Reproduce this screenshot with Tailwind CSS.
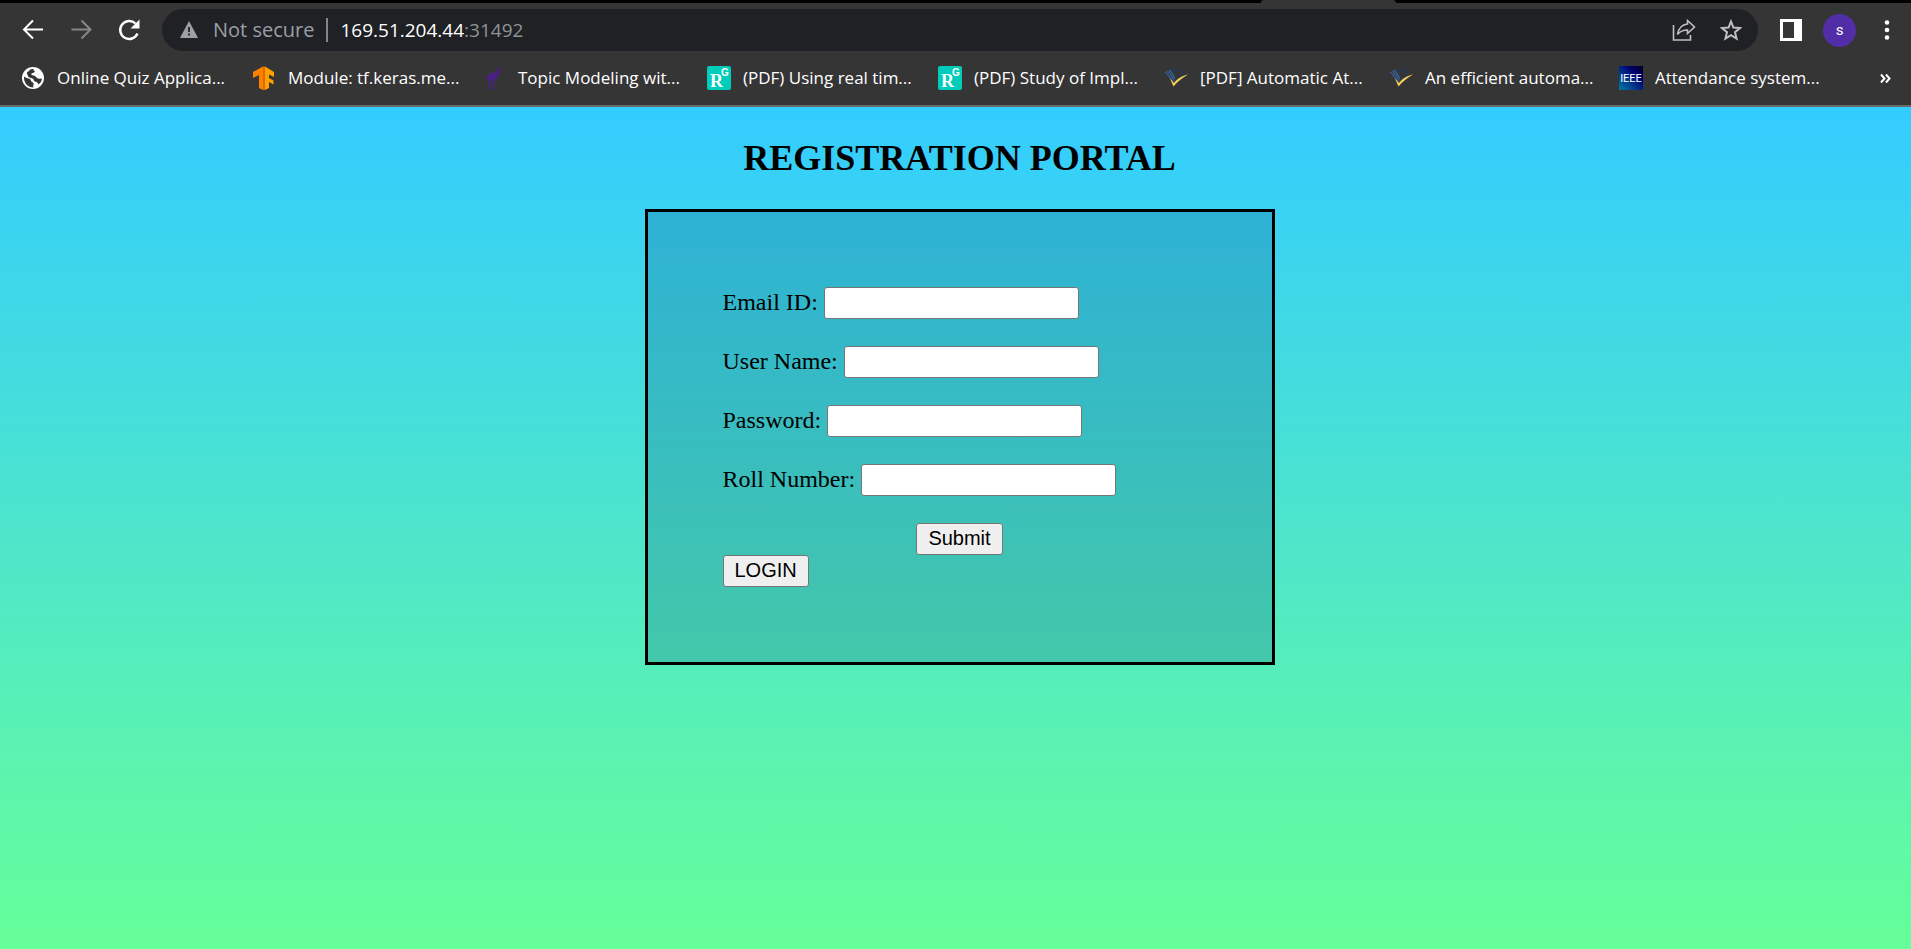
<!DOCTYPE html>
<html lang="en">
<head>
<meta charset="utf-8">
<meta name="viewport" content="width=device-width, initial-scale=1">
<title>Registration Portal</title>
<script src="https://cdn.jsdelivr.net/npm/@tailwindcss/browser@4"></script>
</head>
<body class="flex min-h-screen flex-col bg-[#353535]">
<svg class="hidden" aria-hidden="true">
  <symbol id="rg" viewBox="0 0 24 24">
    <rect width="24" height="24" rx="2" fill="#00ccbb"/>
    <text x="3" y="21" font-family="Liberation Serif, serif" font-weight="bold" font-size="18" fill="#fff">R</text>
    <text x="14" y="10" font-family="Liberation Sans, sans-serif" font-weight="bold" font-size="10" fill="#fff">G</text>
  </symbol>
  <symbol id="scholar" viewBox="0 0 24 24">
    <path d="M7 4l9-.5 2 3-1 6-6 4z" fill="none" stroke="#1f3a6e" stroke-width="1.2"/>
    <path d="M1 6c3 2 5 5 8 11M3 5c3 2 5 5 7 10M5 4c3 2 4 5 6 9" fill="none" stroke="#3b6297" stroke-width="1.2"/>
    <path d="M6 12.500l4 4.500C14 12 18 10 24 8.500 18 12 13 16 9.500 20.500z" fill="#f6d155"/>
  </symbol>
</svg>

<header class="text-white">
  <div class="flex h-[3px] bg-black">
    <div class="ml-[66%] w-[135px] rounded-t-sm bg-[#353535]"></div>
  </div>
  <div class="flex items-center pt-[6px] pr-3 pl-[21px]">
    <button type="button" aria-label="Back" class="mr-6 size-6">
      <svg viewBox="0 0 24 24" fill="none" stroke="#fff" stroke-width="2"><path d="M22 11.500H3.500M12 2.500l-9 9 9 9"/></svg>
    </button>
    <button type="button" aria-label="Forward" class="mr-6 size-6">
      <svg viewBox="0 0 24 24" fill="none" stroke="#868686" stroke-width="2"><path d="M2.500 11.500H21M12.500 2.500l9 9-9 9"/></svg>
    </button>
    <button type="button" aria-label="Reload" class="mr-[21px] size-6">
      <svg viewBox="0 0 24 24"><path d="M20.500 15.500A9 9 0 1 1 18.500 5.500" fill="none" stroke="#fff" stroke-width="2.400"/><path d="M22.500 1.500v9h-9z" fill="#fff"/></svg>
    </button>
    <div class="flex h-[42px] flex-1 items-center rounded-full bg-[#202124] pr-[14px] pl-[18px] font-['Open_Sans',sans-serif] text-[19px]">
      <svg class="mr-[15px] h-[18px] w-[18px]" viewBox="0 0 18 18"><path d="M9 0l9 17H0z" fill="#9aa0a6"/><path d="M9 6v5M9 12.500v2" stroke="#202124" stroke-width="1.800"/></svg>
      <span class="text-xl text-[#9aa0a6]">Not secure</span>
      <span class="mx-3 h-6 w-[2px] bg-[#80868b]"></span>
      <span>169.51.204.44<span class="text-[#8f9398]">:31492</span></span>
      <span class="flex-1"></span>
      <button type="button" aria-label="Share" class="mr-6 size-6">
        <svg viewBox="0 0 24 24" fill="none" stroke="#c0c0c0" stroke-width="1.600"><path d="M1.500 7v15h17v-5"/><path d="M15.500 2.500l7 6.500-7 6.500V12c-4.500 0-7.500 1.300-10 4.500C6.500 10.500 10 6.500 15.500 6z"/></svg>
      </button>
      <button type="button" aria-label="Bookmark this page" class="size-6">
        <svg viewBox="0 0 24 24" fill="none" stroke="#c0c0c0" stroke-width="2"><path d="M11 3.500l2.400 6 6.600.5-5 4.200 1.600 6.500-5.600-3.500-5.600 3.500L7 14.200 2 10l6.600-.5z"/></svg>
      </button>
    </div>
    <button type="button" aria-label="Side panel" class="ml-[22px] h-[22px] w-[22px]">
      <svg viewBox="0 0 22 22"><path fill="#fff" fill-rule="evenodd" d="M0 0h22v22H0zM3 3v16h11V3z"/></svg>
    </button>
    <button type="button" aria-label="Profile" class="ml-[21px] size-[33px] rounded-full bg-[#512da8] font-[Roboto,sans-serif] text-[15px] leading-[33px]">s</button>
    <button type="button" aria-label="Menu" class="ml-[19px] size-6">
      <svg viewBox="0 0 24 24" fill="#fff"><circle cx="12" cy="4.500" r="2.300"/><circle cx="12" cy="12" r="2.300"/><circle cx="12" cy="19.500" r="2.300"/></svg>
    </button>
  </div>
  <nav aria-label="Bookmarks" class="flex h-14 items-center border-b-2 border-[#6a6a6a] pr-5 pl-[21px] font-['Open_Sans',sans-serif] text-[17px] whitespace-nowrap">
    <a href="#" class="flex w-[231px] items-center gap-3">
      <svg class="size-6 shrink-0" viewBox="0 0 24 24"><circle cx="12" cy="12" r="11" fill="#fff"/><path d="M3 10.500c2 2 4.500 1.500 6 2.500 1.300 1 .5 2.200 2 3 1.300.7 2 1 1.500 2.500-.3 1-.5 2 0 3C7 21.500 2.500 17 3 10.500zM9 3.500l3.500-.8c-.5 1.500.3 2 1.500 2.300-.3 1.500-2 2-3.500 2.500-.8.5.2 1.500 1 1.700 2 .3 3.500 1.300 4.500 2.800 1 1 3 .8 5 .5-.2 2.500-1.500 4.500-3.500 6-.5-1.500-1.500-2.500-3-2.800-2-.4-1.500-2-2.500-3-1.500-1-4.500-.7-5-2.700-.3-1.500-1.500-2-1-3.500C7 5.500 8.500 5 9 3.500z" fill="#353535"/></svg>
      <span>Online Quiz Applica...</span>
    </a>
    <a href="#" class="flex w-[230px] items-center gap-3">
      <svg class="size-6 shrink-0" viewBox="0 0 24 24"><path d="M1 6L11 .5V24l-4-2V9L1 12z" fill="#ff8000"/><path d="M11 .5h2V24h-2z" fill="#d96b00"/><path d="M13 .5L22 6v5l-5-2.500V12l4.500 2.500v4L17 16v6l-4 2z" fill="#ffa000"/></svg>
      <span>Module: tf.keras.me...</span>
    </a>
    <a href="#" class="flex w-[225px] items-center gap-3">
      <svg class="size-6 shrink-0" viewBox="0 0 24 24"><path d="M17 0l1 2 2 1.800-2.200.5c-.3 3-.8 6.200-3.300 8.200-.8.700-1.500 1-2 1.300l-.6 8.700 1.500 1h-3l.2-9H9.200l-.9 3.500.2 6 .8 1.200H6.200l.9-1.700-.3-4.500.4-5-1.700 1C4 11 5 7.500 10 7c3-.3 5-1 6-3.500z" fill="#4b2085"/></svg>
      <span>Topic Modeling wit...</span>
    </a>
    <a href="#" class="flex w-[231px] items-center gap-3">
      <svg class="size-6 shrink-0"><use href="#rg"/></svg>
      <span>(PDF) Using real tim...</span>
    </a>
    <a href="#" class="flex w-[226px] items-center gap-3">
      <svg class="size-6 shrink-0"><use href="#rg"/></svg>
      <span>(PDF) Study of Impl...</span>
    </a>
    <a href="#" class="flex w-[225px] items-center gap-3">
      <svg class="size-6 shrink-0"><use href="#scholar"/></svg>
      <span>[PDF] Automatic At...</span>
    </a>
    <a href="#" class="flex w-[230px] items-center gap-3">
      <svg class="size-6 shrink-0"><use href="#scholar"/></svg>
      <span>An efficient automa...</span>
    </a>
    <a href="#" class="flex items-center gap-3">
      <svg class="size-6 shrink-0" viewBox="0 0 24 24"><defs><linearGradient id="ieee" x1="1" y1="0" x2="0" y2="1"><stop offset="0" stop-color="#000018"/><stop offset=".3" stop-color="#000070"/><stop offset="1" stop-color="#0079a8"/></linearGradient></defs><rect width="24" height="24" fill="url(#ieee)"/><text x="12" y="16" text-anchor="middle" font-family="Roboto, sans-serif" font-size="11" fill="#fff">IEEE</text></svg>
      <span>Attendance system...</span>
    </a>
    <button type="button" aria-label="More bookmarks" class="ml-auto h-6 w-[11px]">
      <svg viewBox="0 0 11 24" fill="none" stroke="#fff" stroke-width="2"><path d="M1 8.500l3.500 4L1 16.500M6 8.500l3.500 4-3.500 4"/></svg>
    </button>
  </nav>
</header>

<main class="flex flex-1 flex-col items-center bg-linear-to-b/srgb from-[#33ccff] to-[#66ff99] px-4 pb-8 font-['Liberation_Serif',serif] text-2xl text-black">
  <h1 class="mt-[31px] pl-2 text-4xl font-bold">REGISTRATION PORTAL</h1>
  <form class="mt-[31px] ml-2 w-full max-w-[630px] border-[3px] border-black bg-[#003366]/20 p-[75px]">
    <div class="flex flex-col items-start gap-[27px]">
      <div class="flex h-8 items-start gap-[6px]">
        <label for="email" class="leading-[30px]">Email ID:</label>
        <input id="email" type="text" class="h-8 w-[255px] rounded-[3px] border border-[#767676] bg-white px-1 font-['Liberation_Sans',sans-serif] text-xl">
      </div>
      <div class="flex h-8 items-start gap-[6px]">
        <label for="user" class="leading-[30px]">User Name:</label>
        <input id="user" type="text" class="h-8 w-[255px] rounded-[3px] border border-[#767676] bg-white px-1 font-['Liberation_Sans',sans-serif] text-xl">
      </div>
      <div class="flex h-8 items-start gap-[6px]">
        <label for="password" class="leading-[30px]">Password:</label>
        <input id="password" type="password" class="h-8 w-[255px] rounded-[3px] border border-[#767676] bg-white px-1 font-['Liberation_Sans',sans-serif] text-xl">
      </div>
      <div class="flex h-8 items-start gap-[6px]">
        <label for="roll" class="leading-[30px]">Roll Number:</label>
        <input id="roll" type="text" class="h-8 w-[255px] rounded-[3px] border border-[#767676] bg-white px-1 font-['Liberation_Sans',sans-serif] text-xl">
      </div>
      <button type="submit" class="h-8 self-center rounded-[3px] border border-[#767676] bg-[#efefef] px-[11px] pb-[2px] font-['Liberation_Sans',sans-serif] text-xl">Submit</button>
    </div>
    <button type="button" class="block h-8 rounded-[3px] border border-[#767676] bg-[#efefef] px-[11px] pb-[2px] font-['Liberation_Sans',sans-serif] text-xl">LOGIN</button>
  </form>
</main>
</body>
</html>
